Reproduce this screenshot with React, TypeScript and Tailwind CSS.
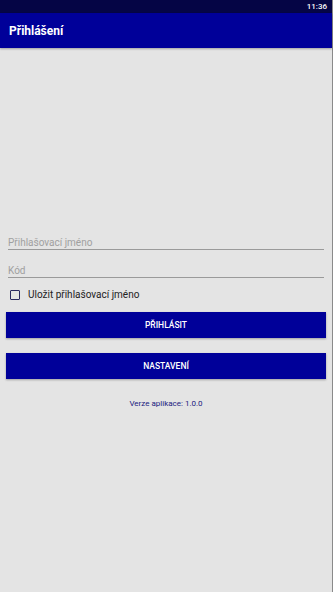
import React from "react";

export default function App() {
  return (
    <div className="w-[333px] h-[592px] bg-[#e4e4e4] flex flex-col border-r border-[#8a8a8a]" style={{ fontFamily: "Roboto, 'Noto Sans', sans-serif" }}>
      <div className="h-[13px] bg-[#050545] flex items-center justify-end pr-[5px]">
        <span className="text-[8px] leading-none text-white font-medium">11:36</span>
      </div>
      <div className="h-[35px] bg-[#000099] flex items-center px-[9px] shadow-[0_1px_2px_rgba(0,0,0,0.3)]">
        <span className="text-[12px] font-bold text-white">Přihlášení</span>
      </div>
      <div className="flex flex-col px-[6px] pt-[186px]">
        <div className="mx-[2px] border-b border-[#9a9a9a] h-[16px] flex items-end pb-[1px]">
          <span className="text-[10px] text-[#a0a0a0] leading-none">Přihlašovací jméno</span>
        </div>
        <div className="mx-[2px] mt-[12px] border-b border-[#9a9a9a] h-[16px] flex items-end pb-[1px]">
          <span className="text-[10px] text-[#a0a0a0] leading-none">Kód</span>
        </div>
        <div className="flex items-center mt-[10px] ml-[4px] h-[13px]">
          <div className="w-[10px] h-[10px] border-[1.5px] border-[#2a2a60] rounded-[1px]" />
          <span className="ml-[8px] text-[10px] text-[#222] leading-none">Uložit přihlašovací jméno</span>
        </div>
        <button className="mt-[11px] h-[26px] bg-[#000099] text-white text-[8.5px] font-medium shadow-[0_1px_2px_rgba(0,0,0,0.3)] flex items-center justify-center">
          PŘIHLÁSIT
        </button>
        <button className="mt-[15px] h-[26px] bg-[#000099] text-white text-[8.5px] font-medium shadow-[0_1px_2px_rgba(0,0,0,0.3)] flex items-center justify-center">
          NASTAVENÍ
        </button>
        <div className="mt-[19px] text-center text-[8px] text-[#1a1a80]">Verze aplikace: 1.0.0</div>
      </div>
    </div>
  );
}
